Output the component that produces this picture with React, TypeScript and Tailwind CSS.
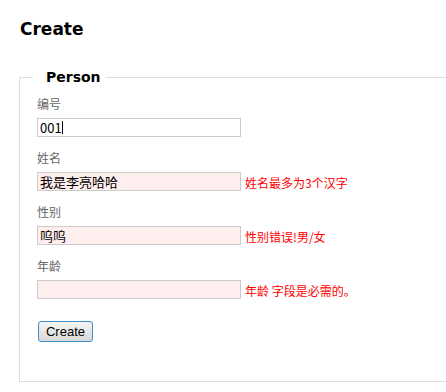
const cjk = "font-['Noto_Sans_CJK_SC',sans-serif]";

type Field = {
  label: string;
  value: string;
  error?: string;
  caret?: boolean;
};

const fields: Field[] = [
  { label: "编号", value: "001", caret: true },
  { label: "姓名", value: "我是李亮哈哈", error: "姓名最多为3个汉字" },
  { label: "性别", value: "呜呜", error: "性别错误!男/女" },
  { label: "年龄", value: "", error: "年龄 字段是必需的。" },
];

function FieldRow({ field }: { field: Field }) {
  const invalid = Boolean(field.error);
  return (
    <div className="mb-[12px]">
      <div className={`h-[18px] text-[12px] leading-[18px] text-[#666] ${cjk}`}>
        {field.label}
      </div>
      <div className="mt-[5px] flex items-center">
        <div className="relative">
          <input
            readOnly
            value={field.value}
            className={`block h-[19px] w-[204px] border border-[#ccc] px-[2px] text-[13px] leading-[17px] text-black outline-none ${cjk} ${
              invalid ? "bg-[#ffeeee]" : "bg-white"
            }`}
          />
          {field.caret && (
            <span className="absolute left-[25px] top-[3px] h-[13px] w-px bg-black" />
          )}
        </div>
        {field.error && (
          <span className={`ml-[4px] mt-[2px] whitespace-pre text-[12px] leading-[16px] text-[#ff0000] ${cjk}`}>
            {field.error}
          </span>
        )}
      </div>
    </div>
  );
}

export default function App() {
  return (
    <div className="h-[392px] w-full overflow-hidden bg-white">
      <h2 className="ml-[20px] pt-[17px] font-['DejaVu_Sans',sans-serif] text-[17px] font-bold leading-[24px] text-black">
        Create
      </h2>

      <fieldset className="mt-[28px] ml-[19px] w-[520px] border border-[#ddd] pl-[17px] pt-[9px] pb-[39px]">
        <legend className="ml-[-4px] pl-[13px] pr-[5px] font-['DejaVu_Sans',sans-serif] text-[14px] font-bold leading-[17px] text-black">
          Person
        </legend>

        {fields.map((field) => (
          <FieldRow key={field.label} field={field} />
        ))}

        <button
          type="button"
          className="mt-[22px] ml-[1px] block h-[21px] w-[55px] rounded-[3px] border border-[#3d8fc7] bg-gradient-to-b from-[#f6f6f6] to-[#d9d9d9] font-['Liberation_Sans',sans-serif] text-[13px] leading-[19px] text-black"
        >
          Create
        </button>
      </fieldset>
    </div>
  );
}
